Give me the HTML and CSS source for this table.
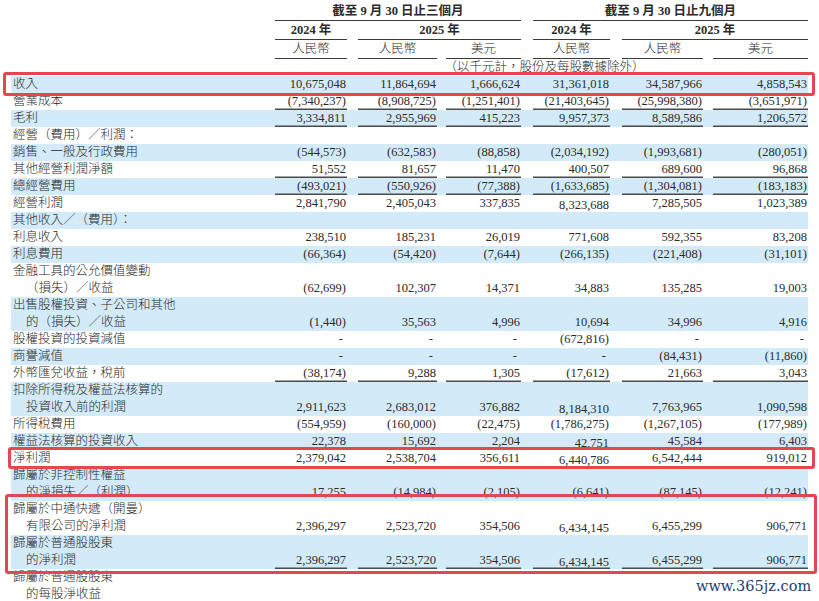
FILE: index.html
```html
<!DOCTYPE html>
<html lang="zh-Hant">
<head>
<meta charset="utf-8">
<title>財務報表</title>
<link rel="stylesheet" href="styles.css">
</head>
<body>
<div class="sheet">
  <div class="hrow ha">
    <div></div>
    <div class="span13"><div class="hl">截至 9 月 30 日止三個月</div></div>
    <div class="span46"><div class="hl">截至 9 月 30 日止九個月</div></div>
  </div>
  <div class="hrow hb">
    <div></div>
    <div class="c1"><div class="hl">2024 年</div></div>
    <div class="span23"><div class="hl">2025 年</div></div>
    <div class="c4"><div class="hl">2024 年</div></div>
    <div class="span56"><div class="hl">2025 年</div></div>
  </div>
  <div class="hrow hc">
    <div></div>
    <div class="c1"><div class="hl">人民幣</div></div>
    <div class="c2"><div class="hl">人民幣</div></div>
    <div class="c3"><div class="hl">美元</div></div>
    <div class="c4"><div class="hl">人民幣</div></div>
    <div class="c5"><div class="hl">人民幣</div></div>
    <div class="c6"><div class="hl">美元</div></div>
  </div>
  <div class="hrow hd">
    <div></div>
    <div class="spanall">（以千元計，股份及每股數據除外）</div>
  </div>

  <div class="row b"><div class="lbl">收入</div><div class="n"><div class="v">10,675,048</div></div><div class="n"><div class="v">11,864,694</div></div><div class="n"><div class="v">1,666,624</div></div><div class="n"><div class="v">31,361,018</div></div><div class="n"><div class="v">34,587,966</div></div><div class="n"><div class="v">4,858,543</div></div></div>
  <div class="row ul"><div class="lbl">營業成本</div><div class="n"><div class="v">(7,340,237)</div></div><div class="n"><div class="v">(8,908,725)</div></div><div class="n"><div class="v">(1,251,401)</div></div><div class="n"><div class="v">(21,403,645)</div></div><div class="n"><div class="v">(25,998,380)</div></div><div class="n"><div class="v">(3,651,971)</div></div></div>
  <div class="row b ul"><div class="lbl">毛利</div><div class="n"><div class="v">3,334,811</div></div><div class="n"><div class="v">2,955,969</div></div><div class="n"><div class="v">415,223</div></div><div class="n"><div class="v">9,957,373</div></div><div class="n"><div class="v">8,589,586</div></div><div class="n"><div class="v">1,206,572</div></div></div>
  <div class="row"><div class="lbl">經營（費用）／利潤：</div></div>
  <div class="row b"><div class="lbl">銷售、一般及行政費用</div><div class="n"><div class="v">(544,573)</div></div><div class="n"><div class="v">(632,583)</div></div><div class="n"><div class="v">(88,858)</div></div><div class="n"><div class="v">(2,034,192)</div></div><div class="n"><div class="v">(1,993,681)</div></div><div class="n"><div class="v">(280,051)</div></div></div>
  <div class="row ul"><div class="lbl">其他經營利潤淨額</div><div class="n"><div class="v">51,552</div></div><div class="n"><div class="v">81,657</div></div><div class="n"><div class="v">11,470</div></div><div class="n"><div class="v">400,507</div></div><div class="n"><div class="v">689,600</div></div><div class="n"><div class="v">96,868</div></div></div>
  <div class="row b ul"><div class="lbl">總經營費用</div><div class="n"><div class="v">(493,021)</div></div><div class="n"><div class="v">(550,926)</div></div><div class="n"><div class="v">(77,388)</div></div><div class="n"><div class="v">(1,633,685)</div></div><div class="n"><div class="v">(1,304,081)</div></div><div class="n"><div class="v">(183,183)</div></div></div>
  <div class="row"><div class="lbl">經營利潤</div><div class="n"><div class="v">2,841,790</div></div><div class="n"><div class="v">2,405,043</div></div><div class="n"><div class="v">337,835</div></div><div class="n"><div class="v low">8,323,688</div></div><div class="n"><div class="v">7,285,505</div></div><div class="n"><div class="v">1,023,389</div></div></div>
  <div class="row b"><div class="lbl">其他收入／（費用）：</div></div>
  <div class="row"><div class="lbl">利息收入</div><div class="n"><div class="v">238,510</div></div><div class="n"><div class="v">185,231</div></div><div class="n"><div class="v">26,019</div></div><div class="n"><div class="v">771,608</div></div><div class="n"><div class="v">592,355</div></div><div class="n"><div class="v">83,208</div></div></div>
  <div class="row b"><div class="lbl">利息費用</div><div class="n"><div class="v">(66,364)</div></div><div class="n"><div class="v">(54,420)</div></div><div class="n"><div class="v">(7,644)</div></div><div class="n"><div class="v">(266,135)</div></div><div class="n"><div class="v">(221,408)</div></div><div class="n"><div class="v">(31,101)</div></div></div>
  <div class="row two"><div class="lbl">金融工具的公允價值變動<span class="ind">（損失）／收益</span></div><div class="n"><div class="v">(62,699)</div></div><div class="n"><div class="v">102,307</div></div><div class="n"><div class="v">14,371</div></div><div class="n"><div class="v">34,883</div></div><div class="n"><div class="v">135,285</div></div><div class="n"><div class="v">19,003</div></div></div>
  <div class="row two b"><div class="lbl">出售股權投資、子公司和其他<span class="ind">的（損失）／收益</span></div><div class="n"><div class="v">(1,440)</div></div><div class="n"><div class="v">35,563</div></div><div class="n"><div class="v">4,996</div></div><div class="n"><div class="v">10,694</div></div><div class="n"><div class="v">34,996</div></div><div class="n"><div class="v">4,916</div></div></div>
  <div class="row"><div class="lbl">股權投資的投資減值</div><div class="n"><div class="v dash">-</div></div><div class="n"><div class="v dash">-</div></div><div class="n"><div class="v dash">-</div></div><div class="n"><div class="v">(672,816)</div></div><div class="n"><div class="v dash">-</div></div><div class="n"><div class="v dash">-</div></div></div>
  <div class="row b"><div class="lbl">商譽減值</div><div class="n"><div class="v dash">-</div></div><div class="n"><div class="v dash">-</div></div><div class="n"><div class="v dash">-</div></div><div class="n"><div class="v dash">-</div></div><div class="n"><div class="v">(84,431)</div></div><div class="n"><div class="v">(11,860)</div></div></div>
  <div class="row ul"><div class="lbl">外幣匯兌收益，稅前</div><div class="n"><div class="v">(38,174)</div></div><div class="n"><div class="v">9,288</div></div><div class="n"><div class="v">1,305</div></div><div class="n"><div class="v">(17,612)</div></div><div class="n"><div class="v">21,663</div></div><div class="n"><div class="v">3,043</div></div></div>
  <div class="row two b"><div class="lbl">扣除所得稅及權益法核算的<span class="ind">投資收入前的利潤</span></div><div class="n"><div class="v">2,911,623</div></div><div class="n"><div class="v">2,683,012</div></div><div class="n"><div class="v">376,882</div></div><div class="n"><div class="v low">8,184,310</div></div><div class="n"><div class="v">7,763,965</div></div><div class="n"><div class="v">1,090,598</div></div></div>
  <div class="row"><div class="lbl">所得稅費用</div><div class="n"><div class="v">(554,959)</div></div><div class="n"><div class="v">(160,000)</div></div><div class="n"><div class="v">(22,475)</div></div><div class="n"><div class="v">(1,786,275)</div></div><div class="n"><div class="v">(1,267,105)</div></div><div class="n"><div class="v">(177,989)</div></div></div>
  <div class="row b ul"><div class="lbl">權益法核算的投資收入</div><div class="n"><div class="v">22,378</div></div><div class="n"><div class="v">15,692</div></div><div class="n"><div class="v">2,204</div></div><div class="n"><div class="v low">42,751</div></div><div class="n"><div class="v">45,584</div></div><div class="n"><div class="v">6,403</div></div></div>
  <div class="row"><div class="lbl">淨利潤</div><div class="n"><div class="v">2,379,042</div></div><div class="n"><div class="v">2,538,704</div></div><div class="n"><div class="v">356,611</div></div><div class="n"><div class="v low">6,440,786</div></div><div class="n"><div class="v">6,542,444</div></div><div class="n"><div class="v">919,012</div></div></div>
  <div class="row two b"><div class="lbl">歸屬於非控制性權益<span class="ind">的淨損失／（利潤）</span></div><div class="n"><div class="v">17,255</div></div><div class="n"><div class="v">(14,984)</div></div><div class="n"><div class="v">(2,105)</div></div><div class="n"><div class="v">(6,641)</div></div><div class="n"><div class="v">(87,145)</div></div><div class="n"><div class="v">(12,241)</div></div></div>
  <div class="row two"><div class="lbl">歸屬於中通快遞（開曼）<span class="ind">有限公司的淨利潤</span></div><div class="n"><div class="v">2,396,297</div></div><div class="n"><div class="v">2,523,720</div></div><div class="n"><div class="v">354,506</div></div><div class="n"><div class="v low">6,434,145</div></div><div class="n"><div class="v">6,455,299</div></div><div class="n"><div class="v">906,771</div></div></div>
  <div class="row two b ul"><div class="lbl">歸屬於普通股股東<span class="ind">的淨利潤</span></div><div class="n"><div class="v">2,396,297</div></div><div class="n"><div class="v">2,523,720</div></div><div class="n"><div class="v">354,506</div></div><div class="n"><div class="v low">6,434,145</div></div><div class="n"><div class="v">6,455,299</div></div><div class="n"><div class="v">906,771</div></div></div>
  <div class="row two"><div class="lbl">歸屬於普通股股東<span class="ind">的每股淨收益</span></div></div>

  <div class="mark m1"></div>
  <div class="mark m2"></div>
  <div class="mark m3"></div>
  <div class="wm">www.365jz.com</div>
</div>
</body>
</html>
```

FILE: styles.css
```css
html, body {
  margin: 0;
  padding: 0;
  background: #ffffff;
}

.sheet {
  position: relative;
  width: 819px;
  height: 601px;
  overflow: hidden;
  font-family: "Liberation Serif", "Noto Sans CJK TC", serif;
  font-size: 12.5px;
  color: #2b2b2b;
}

/* shared column grid: label | c1..c6 (each with its leading gap) */
.hrow,
.row {
  display: grid;
  grid-template-columns: 264px 72px 90px 84px 89px 93px 105px;
  margin-left: 11px;
  width: 797px;
}

/* ---------- header ---------- */
.hrow {
  align-items: end;
}
.ha { height: 21px; font-weight: bold; }
.hb { height: 19px; font-weight: bold; }
.hc { height: 19px; }
.hd { height: 17px; align-items: center; }

.hl {
  text-align: center;
  line-height: 17px;
  border-bottom: 1.5px solid #3a3a3a;
}
.hc .hl { font-weight: 300; }

.span13 { grid-column: 2 / 5; }
.span46 { grid-column: 5 / 8; padding-left: 12px; }
.span23 { grid-column: 3 / 5; padding-left: 11px; }
.span56 { grid-column: 6 / 8; padding-left: 12px; }
.spanall {
  grid-column: 2 / 8;
  text-align: center;
  font-weight: 300;
  line-height: 17px;
  padding-left: 6px;
}

.c2 { padding-left: 11px; }
.c3 { padding-left: 9px; }
.c4 { padding-left: 12px; }
.c5 { padding-left: 12px; }
.c6 { padding-left: 10px; }

/* ---------- body rows ---------- */
.row {
  height: 17px;
  line-height: 17px;
}
.row.two { height: 34px; }
.row.b { background: #d3ebf8; }

.lbl {
  padding-left: 2px;
  color: #2a2a2a;
  font-weight: 300;
  white-space: nowrap;
}
.ind {
  display: block;
  padding-left: 13px;
}

.n {
  display: flex;
  align-items: flex-end;
}
.row > .n:nth-child(3) { padding-left: 11px; }
.row > .n:nth-child(4) { padding-left: 9px; }
.row > .n:nth-child(5) { padding-left: 12px; }
.row > .n:nth-child(6) { padding-left: 12px; }
.row > .n:nth-child(7) { padding-left: 10px; }

.v {
  width: 100%;
  text-align: right;
  padding-right: 1px;
  height: 17px;
  box-sizing: border-box;
}
.v.low { padding-top: 2px; line-height: 17px; height: 17px; }
.v.dash { padding-right: 4px; }
.ul .v { box-shadow: inset 0 -1.5px 0 #4a4a4a; }

/* ---------- overlays: highlight frames and watermark ---------- */
.mark {
  position: absolute;
  border: 3px solid #e3474f;
  border-radius: 3px;
  box-sizing: border-box;
}
.m1 { left: 3px; top: 72px; width: 812px; height: 24px; }
.m2 { left: 8px; top: 447px; width: 807px; height: 22px; }
.m3 { left: 5px; top: 494px; width: 812px; height: 80px; }

.wm {
  position: absolute;
  left: 694px;
  top: 576px;
  font-family: "DejaVu Serif", serif;
  font-size: 14.5px;
  color: #22406f;
  background: #ffffff;
  padding: 0 2px;
  line-height: 20px;
  white-space: nowrap;
}
```
